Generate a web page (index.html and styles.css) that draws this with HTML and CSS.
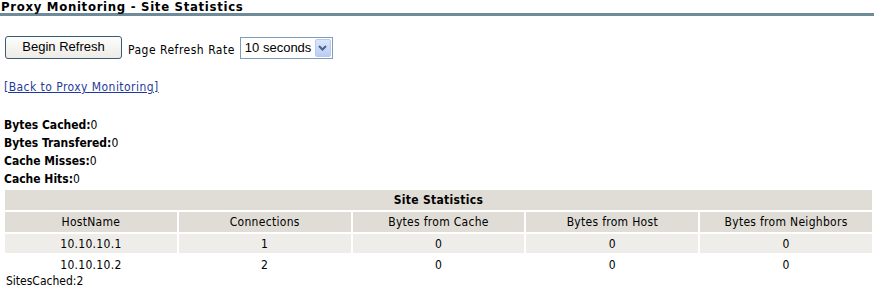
FILE: index.html
```html
<!DOCTYPE html>
<html lang="en">

<head>
    <meta charset="UTF-8">
    <meta name="viewport" content="width=device-width, initial-scale=1.0">
    <title>Proxy Monitoring - Site Statistics</title>
    <link rel="stylesheet" href="styles.css">
</head>

<body>
    <h1 class="page-title">Proxy Monitoring - Site Statistics</h1>

    <form class="refresh-bar">
        <button type="button" class="refresh-btn">Begin Refresh</button>
        <label for="rate">Page Refresh Rate</label>
        <span class="select-wrap">
            <select id="rate" class="rate-select">
                <option>10 seconds</option>
                <option>30 seconds</option>
                <option>60 seconds</option>
            </select>
            <span class="select-arrow">
                <svg width="9" height="6" viewBox="0 0 9 6"><path d="M1 1 L4.5 4.5 L8 1" fill="none" stroke="#4d6185" stroke-width="2"/></svg>
            </span>
        </span>
    </form>

    <p class="back"><a href="#">[Back to Proxy Monitoring]</a></p>

    <div class="totals">
        <div><b>Bytes Cached:</b>0</div>
        <div><b>Bytes Transfered:</b>0</div>
        <div><b>Cache Misses:</b>0</div>
        <div><b>Cache Hits:</b>0</div>
    </div>

    <table class="sites">
        <tr class="caption-row">
            <th colspan="5">Site Statistics</th>
        </tr>
        <tr class="head-row">
            <th>HostName</th>
            <th>Connections</th>
            <th>Bytes from Cache</th>
            <th>Bytes from Host</th>
            <th>Bytes from Neighbors</th>
        </tr>
        <tr class="odd">
            <td>10.10.10.1</td>
            <td>1</td>
            <td>0</td>
            <td>0</td>
            <td>0</td>
        </tr>
        <tr>
            <td>10.10.10.2</td>
            <td>2</td>
            <td>0</td>
            <td>0</td>
            <td>0</td>
        </tr>
    </table>
    <div class="sites-cached">SitesCached:2</div>
</body>

</html>
```
FILE: styles.css
```css
html {
    overflow: hidden;
}
body {
    margin: 0;
    font-family: "DejaVu Sans Condensed", "DejaVu Sans", sans-serif;
    font-size: 12px;
    color: #000;
}
.page-title {
    margin: 0;
    padding-left: 1px;
    font-size: 13px;
    line-height: 13px;
    letter-spacing: 0.7px;
    font-weight: bold;
    border-bottom: 3px solid #6f8a98;
}
.refresh-bar {
    display: flex;
    align-items: center;
    margin: 20px 0 0 5px;
}
.refresh-btn {
    width: 117px;
    height: 23px;
    font-family: "Liberation Sans", Arial, sans-serif;
    font-size: 13px;
    color: #000;
    background: linear-gradient(#fdfdfb, #ecebe6);
    border: 1px solid #3c5a78;
    border-radius: 3px;
    padding: 0 0 2px;
}
.refresh-bar label {
    margin: 4px 0 0 6px;
    letter-spacing: 0.5px;
}
.select-wrap {
    position: relative;
    margin-left: 5px;
}
.rate-select {
    appearance: none;
    width: 93px;
    height: 22px;
    font-family: "Liberation Sans", Arial, sans-serif;
    font-size: 13px;
    color: #000;
    border: 1px solid #7f9db9;
    background: #fff;
    padding: 0 0 0 4px;
    display: block;
}
.select-arrow {
    position: absolute;
    top: 2px;
    right: 2px;
    width: 16px;
    height: 18px;
    display: flex;
    align-items: center;
    justify-content: center;
    background: linear-gradient(#dbe6fb, #b9cdf5);
    border: 1px solid #b7c9ef;
    border-radius: 2px;
    box-sizing: border-box;
    pointer-events: none;
}
.back {
    margin: 21px 0 0 4px;
    letter-spacing: 0.45px;
}
.back a {
    color: #1f3b9a;
}
.totals {
    margin: 22px 0 0 4px;
    line-height: 18px;
}
.sites {
    margin-left: 3px;
    width: 871px;
    border-collapse: separate;
    border-spacing: 2px;
    table-layout: fixed;
    font-size: 12px;
    letter-spacing: 0.3px;
}
.sites th, .sites td {
    text-align: center;
    padding: 0;
}
.caption-row th {
    height: 20px;
    background: #e0ddd6;
}
.head-row th {
    height: 20px;
    background: #e0ddd6;
    font-weight: normal;
}
.sites td {
    height: 19px;
}
.odd td {
    background: #efede9;
}
.sites-cached {
    margin: -1px 0 0 6px;
    line-height: 13px;
}
```
